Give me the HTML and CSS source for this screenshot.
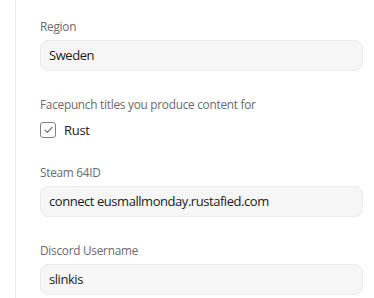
FILE: index.html
```html
<!DOCTYPE html>
<html>
<head>
<meta charset="utf-8">
<link rel="stylesheet" href="styles.css">
</head>
<body>
<div class="panel">
  <div class="form">
    <div class="field">
      <div class="label">Region</div>
      <div class="input">Sweden</div>
    </div>
    <div class="field">
      <div class="label">Facepunch titles you produce content for</div>
      <label class="check-row">
        <span class="checkbox">
          <svg width="9" height="8" viewBox="0 0 9 8"><path d="M1 4.2 L3.4 6.4 L8 1.4" fill="none" stroke="#666" stroke-width="1.1" stroke-linecap="round" stroke-linejoin="round"/></svg>
        </span>
        <span class="check-text">Rust</span>
      </label>
    </div>
    <div class="field">
      <div class="label">Steam 64ID</div>
      <div class="input">connect eusmallmonday.rustafied.com</div>
    </div>
    <div class="field">
      <div class="label">Discord Username</div>
      <div class="input">slinkis</div>
    </div>
  </div>
</div>
</body>
</html>
```
FILE: styles.css
```css
html, body {
  margin: 0;
  padding: 0;
  background: #ffffff;
}
body {
  font-family: "Open Sans", "Noto Sans", sans-serif;
  width: 374px;
  height: 298px;
  overflow: hidden;
}
.panel {
  margin-left: 15px;
  border-left: 1px solid #ececec;
  height: 298px;
  padding-left: 24px;
  padding-right: 11px;
}
.form {
  display: flex;
  flex-direction: column;
  gap: 25px;
  padding-top: 18px;
}
.field {
  display: flex;
  flex-direction: column;
  gap: 5px;
}
.label {
  font-size: 11.8px;
  line-height: 17px;
  letter-spacing: -0.25px;
  color: #6a6a6a;
}
.input {
  height: 29px;
  border: 1px solid #ebebeb;
  background: #f6f6f6;
  border-radius: 8px;
  padding-left: 8px;
  font-size: 13px;
  letter-spacing: -0.45px;
  line-height: 29px;
  color: #1b1b1b;
}
.check-row {
  display: flex;
  align-items: center;
  gap: 8px;
  height: 18px;
  margin-top: 3px;
}
.checkbox {
  width: 14px;
  height: 14px;
  border: 1px solid #808080;
  border-radius: 3px;
  display: flex;
  align-items: center;
  justify-content: center;
}
.check-text {
  font-size: 13px;
  letter-spacing: -0.3px;
  color: #1b1b1b;
}
```
